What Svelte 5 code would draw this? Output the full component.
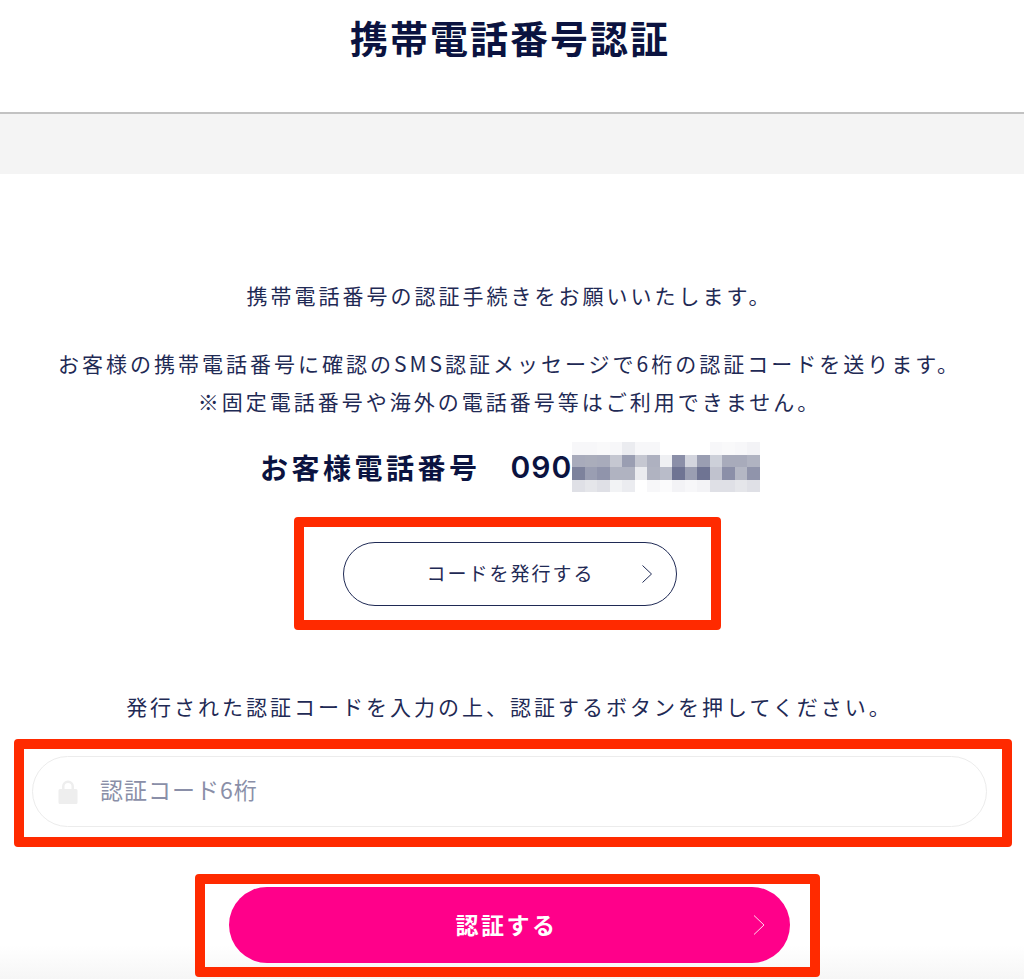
<script>
  const mosaic = [
    ['#f7f7f9','#f7f7f9','#f9f9fa','#f7f7f9','#ebecf0','#f7f7f9','#f7f7f9','#ffffff','#ffffff','#ffffff','#ffffff','#f7f7f9','#f9f9fa','#f7f7f9','#f3f3f6'],
    ['#a8abbb','#aaadbb','#a8abbb','#c5c7d1','#9a9eb2','#c5c7d1','#aeb1c0','#eff0f3','#8b8fa8','#d3d5de','#9a9eb2','#cdd0d9','#a8abbb','#a8abbb','#b0b3c1'],
    ['#7d829c','#9a9eb2','#9094ab','#b0b3c1','#b0b3c1','#eaebef','#b0b3c1','#b9bcc9','#6f7493','#9a9eb2','#6f7493','#c0c2ce','#8b8fa8','#b4b7c4','#9094ab'],
    ['#dfe0e6','#e5e6ea','#dfe0e6','#f2f3f5','#ebecf0','#ffffff','#f7f7f9','#fbfbfc','#f3f3f6','#f7f7f9','#f3f3f6','#dfe0e6','#dfe0e6','#e5e6ea','#dfe0e6']
  ];
</script>

<div class="page">
  <header class="header"><h1>携帯電話番号認証</h1></header>
  <div class="band"></div>
  <main class="main">
    <p class="lead">携帯電話番号の認証手続きをお願いいたします。</p>
    <p class="note">お客様の携帯電話番号に確認のSMS認証メッセージで6桁の認証コードを送ります。<br />※固定電話番号や海外の電話番号等はご利用できません。</p>
    <div class="phone">
      <span class="phone-label">お客様電話番号</span>
      <span class="phone-num">090</span>
      <div class="mosaic" aria-hidden="true">
        {#each mosaic as row}
          {#each row as c}
            <i style="background:{c}"></i>
          {/each}
        {/each}
      </div>
    </div>

    <div class="marked issue-wrap">
      <button class="issue" type="button">
        コードを発行する
        <svg class="chev" viewBox="0 0 12 20" width="12" height="20"><path d="M1.500 1.500 10.500 10 1.500 18.500" fill="none" stroke="#1f2a55" stroke-width="1" /></svg>
      </button>
      <span class="frame frame-issue"></span>
    </div>

    <p class="instruct">発行された認証コードを入力の上、認証するボタンを押してください。</p>

    <div class="marked field-wrap">
      <label class="field">
        <svg class="lock" viewBox="0 0 20 24" width="20" height="24"><path fill="#eeeeee" fill-rule="evenodd" d="M4 9V6.500a6 6 0 0 1 12 0V9h2a1.500 1.500 0 0 1 1.500 1.500v12A1.500 1.500 0 0 1 18 24H2a1.500 1.500 0 0 1-1.500-1.500v-12A1.500 1.500 0 0 1 2 9Zm2.500 0h7V6.500a3.500 3.500 0 0 0-7 0Z" /></svg>
        <input type="text" placeholder="認証コード6桁" />
      </label>
      <span class="frame frame-field"></span>
    </div>

    <div class="marked submit-wrap">
      <button class="submit" type="button">
        認証する
        <svg class="chev chev-white" viewBox="0 0 12 20" width="12" height="20"><path d="M1 .5 11 10 1 19.500" fill="none" stroke="#ffffff" stroke-opacity=".85" stroke-width="1" /></svg>
      </button>
      <span class="frame frame-submit"></span>
    </div>
  </main>
</div>

<style>
  :global(body) {
    margin: 0;
    background: #ffffff;
  }
  .page {
    height: 979px;
    overflow: hidden;
    box-sizing: border-box;
    background: linear-gradient(to bottom, #ffffff 945px, #f6f6f6 979px);
    font-family: "Noto Sans CJK JP", "Noto Sans", sans-serif;
    color: #1f2a55;
  }
  .header {
    height: 114px;
    box-sizing: border-box;
    border-bottom: 2px solid #c2c2c2;
    background: #fff;
    display: flex;
    justify-content: center;
    padding-right: 4px;
  }
  h1 {
    margin: 11px 0 0;
    font-size: 38px;
    line-height: 52px;
    font-weight: 700;
    letter-spacing: 2px;
    color: #0b1340;
  }
  .band {
    height: 60px;
    background: #f4f4f4;
  }
  .main {
    display: flex;
    flex-direction: column;
    align-items: center;
    padding: 102px 5px 0 0;
  }
  p {
    margin: 0;
    text-align: center;
    font-size: 21px;
    line-height: 38px;
    letter-spacing: 3px;
    white-space: nowrap;
  }
  .note {
    margin-top: 30px;
  }
  .phone {
    margin-top: 22px;
    height: 50px;
    display: flex;
    align-items: center;
    width: 500px;
    padding-left: 260px;
    box-sizing: border-box;
    align-self: flex-start;
    color: #0b1340;
    font-weight: 700;
  }
  .phone-label {
    font-size: 28px;
    letter-spacing: 3.500px;
    white-space: nowrap;
  }
  .phone-num {
    font-size: 30px;
    letter-spacing: 1px;
    margin-left: 30px;
    font-family: "Inter", "Noto Sans", sans-serif;
    font-weight: 600;
  }
  .mosaic {
    flex: none;
    display: grid;
    grid-template-columns: repeat(15, 12.500px);
    grid-auto-rows: 12.500px;
    filter: blur(0.6px);
  }
  .mosaic i {
    display: block;
  }
  .marked {
    position: relative;
  }
  .issue-wrap {
    margin-top: 50px;
  }
  .issue {
    width: 334px;
    height: 64px;
    box-sizing: border-box;
    display: flex;
    align-items: center;
    justify-content: center;
    position: relative;
    border: 1.500px solid #1f2a55;
    border-radius: 32px;
    background: #fff;
    color: #1f2a55;
    font: inherit;
    font-size: 19px;
    letter-spacing: 2px;
    padding: 0 0 3px 2px;
  }
  .chev {
    position: absolute;
    right: 23px;
    top: 50%;
    margin-top: -10px;
  }
  .frame {
    position: absolute;
    box-sizing: border-box;
    border: 10px solid #ff2a00;
    border-radius: 4px;
    pointer-events: none;
  }
  .frame-issue {
    left: -49px;
    right: -44px;
    top: -25px;
    bottom: -24px;
  }
  .instruct {
    margin-top: 81px;
  }
  .field-wrap {
    margin-top: 31px;
    width: 955px;
  }
  .field {
    height: 71px;
    box-sizing: border-box;
    display: flex;
    align-items: center;
    border: 1.500px solid #ececec;
    border-radius: 36px;
    padding-left: 25px;
    background: #fff;
  }
  .lock {
    flex: none;
  }
  input {
    flex: 1;
    min-width: 0;
    margin-left: 22px;
    padding: 0 0 5px;
    border: 0;
    outline: 0;
    background: transparent;
    font: inherit;
    font-size: 23px;
    letter-spacing: 1px;
    color: #1f2a55;
  }
  input::placeholder {
    color: #8a8fa8;
    opacity: 1;
  }
  .frame-field {
    left: -18px;
    right: -25px;
    top: -17px;
    bottom: -20px;
  }
  .submit-wrap {
    margin-top: 60px;
  }
  .submit {
    width: 561px;
    height: 76px;
    display: flex;
    align-items: center;
    justify-content: center;
    position: relative;
    border: 0;
    border-radius: 38px;
    background: #ff008a;
    color: #fff;
    font: inherit;
    font-size: 23px;
    font-weight: 700;
    letter-spacing: 2.500px;
    padding: 0 6px 3px 0;
  }
  .chev-white {
    right: 25px;
  }
  .frame-submit {
    left: -34px;
    right: -30px;
    top: -13px;
    bottom: -14px;
  }
</style>
